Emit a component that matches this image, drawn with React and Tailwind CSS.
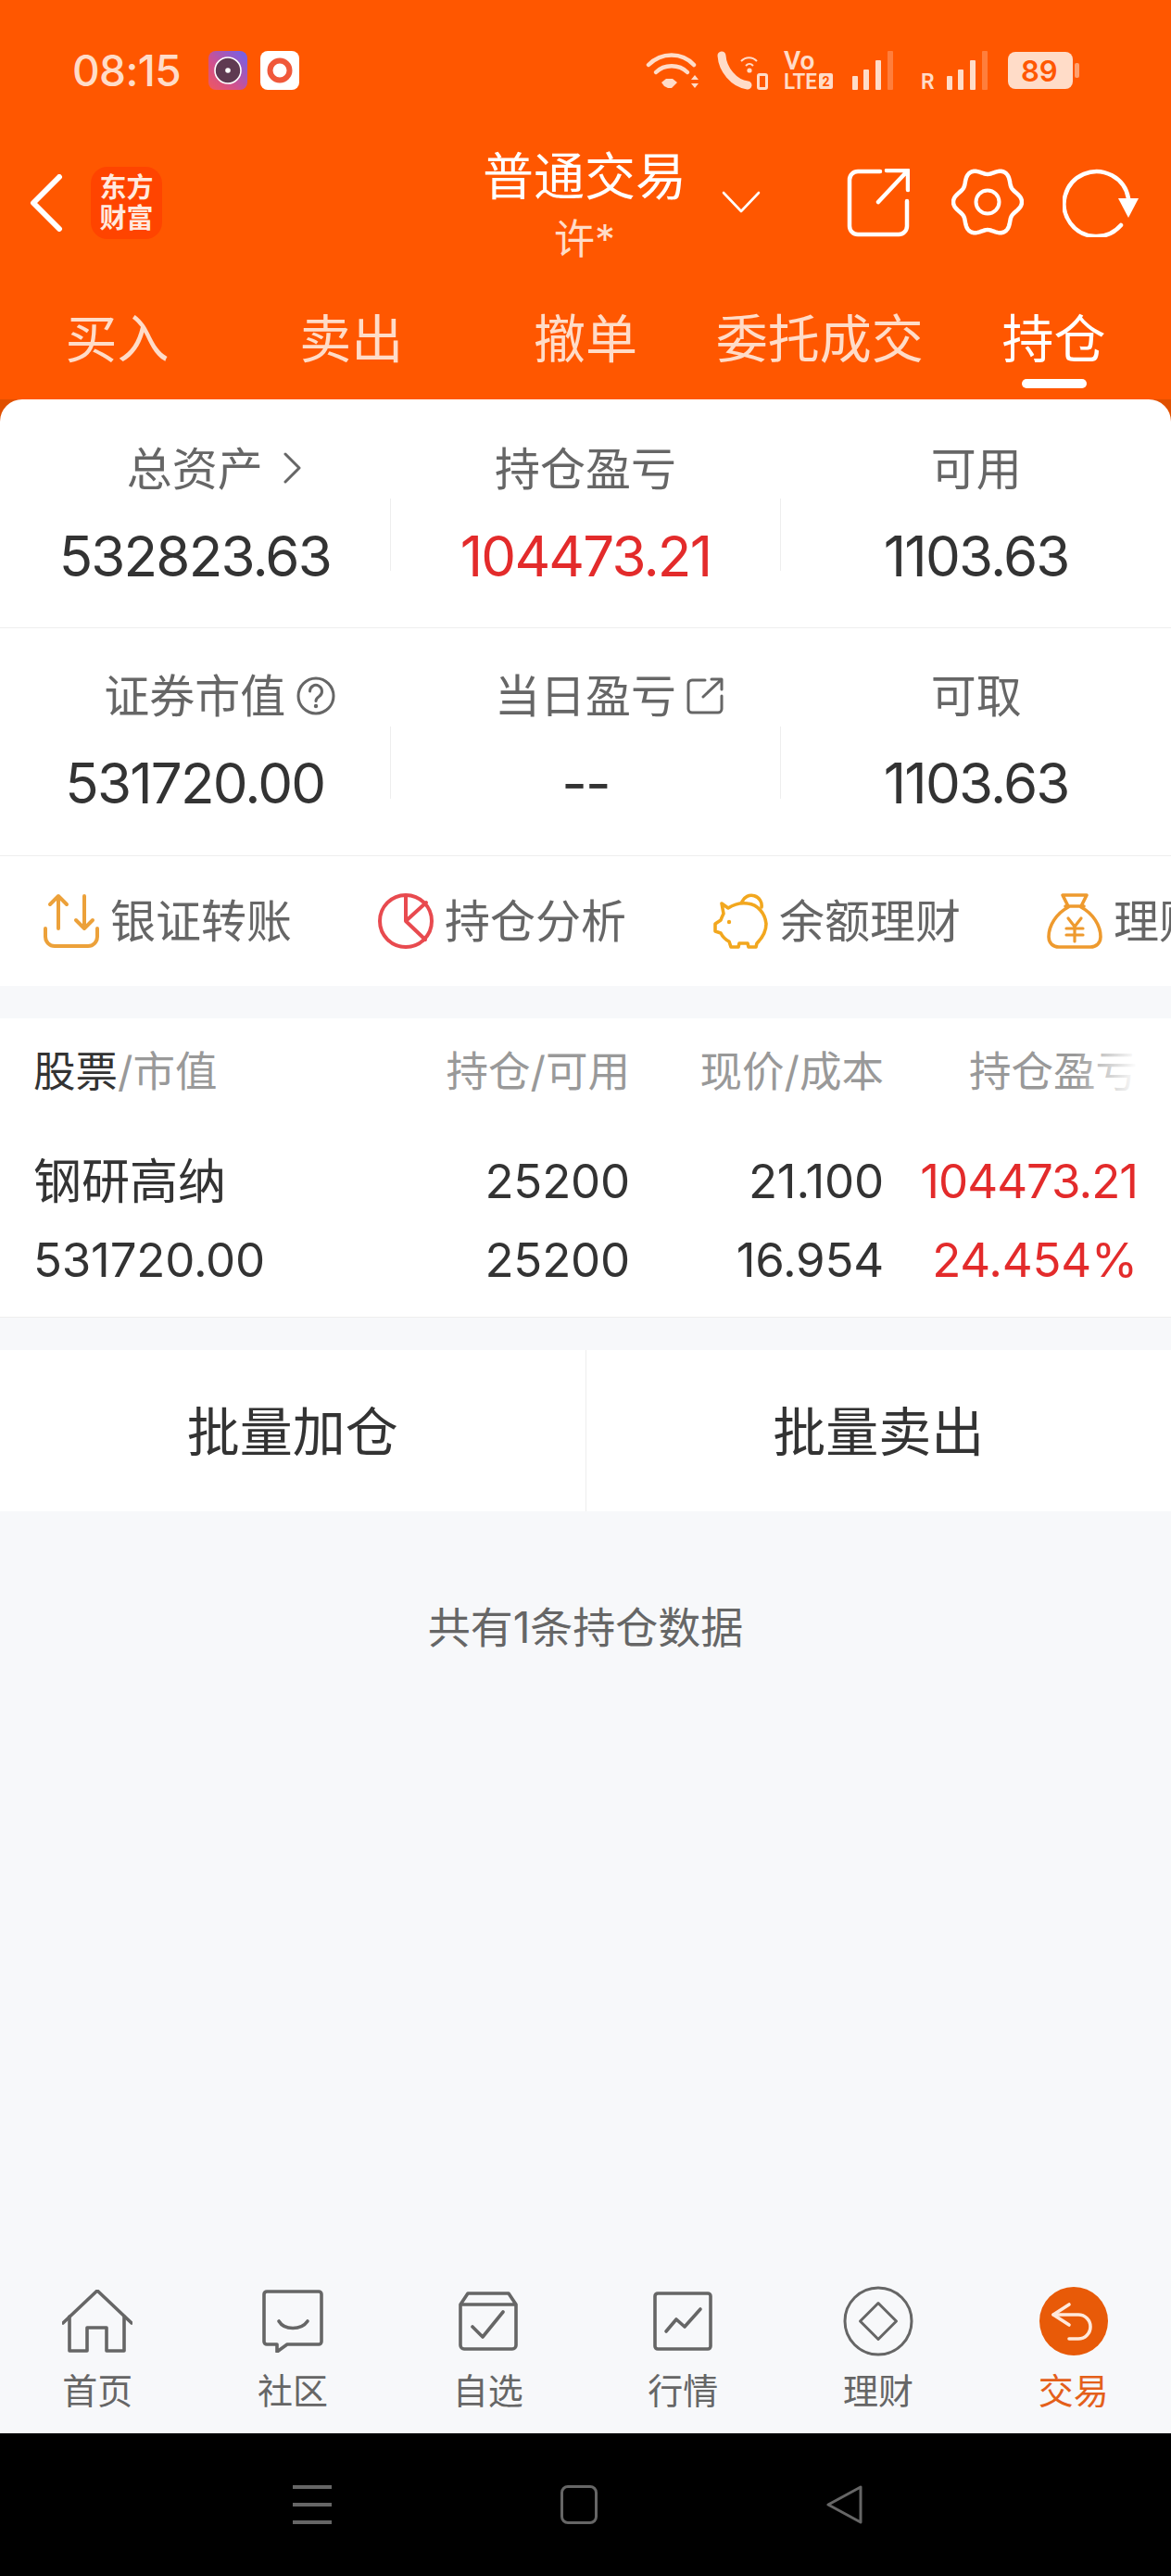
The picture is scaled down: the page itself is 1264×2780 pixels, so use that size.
// App.jsx
import React from 'react';

const gearPath = (() => {
  const pts = [];
  for (let i = 0; i < 120; i++) {
    const a = (i / 120) * Math.PI * 2;
    const r = 33.5 + 3.5 * Math.cos(6 * a);
    pts.push(`${(39 + r * Math.cos(a)).toFixed(2)} ${(38 + r * Math.sin(a)).toFixed(2)}`);
  }
  return `M${pts.join('L')}Z`;
})();

function Signal() {
  return (
    <svg width="45" height="42" viewBox="0 0 45 42" fill="#ffdcc8">
      <rect x="0" y="27" width="6" height="15" rx="1" />
      <rect x="12" y="20" width="6" height="22" rx="1" />
      <rect x="25" y="10" width="6" height="32" rx="1" />
      <rect x="38" y="0" width="6" height="42" rx="1" opacity="0.3" />
    </svg>
  );
}

function StatusBar() {
  return (
    <div className="h-[152px] flex items-center pl-[78px] text-[#ffdcc8]">
      <span className="w-[147px] text-[46px] leading-none font-medium tracking-[-0.6px]">08:15</span>
      <svg width="42" height="42" viewBox="0 0 42 42">
        <defs>
          <linearGradient id="recA" x1="1" y1="0" x2="0" y2="1">
            <stop offset="0" stopColor="#6a62f0" />
            <stop offset="0.6" stopColor="#d0508f" />
            <stop offset="1" stopColor="#f0585f" />
          </linearGradient>
        </defs>
        <rect width="42" height="42" rx="8" fill="url(#recA)" />
        <circle cx="21" cy="21" r="14" fill="#5f3a52" stroke="#fff" strokeWidth="1.6" />
        <circle cx="21" cy="21" r="2.8" fill="#fff" />
      </svg>
      <svg className="ml-[14px]" width="42" height="42" viewBox="0 0 42 42">
        <rect width="42" height="42" rx="8" fill="#fff" />
        <circle cx="21" cy="21" r="10.5" fill="#fff" stroke="#f0583a" strokeWidth="6" />
      </svg>
      <svg className="ml-[374px]" width="59" height="42" viewBox="0 0 59 42" fill="none" stroke="#ffdcc8" strokeLinecap="round">
        <path d="M3 15C17 1 39 1 52 15" strokeWidth="4.5" />
        <path d="M11 23C20 14 36 14 45 23" strokeWidth="4.5" />
        <path d="M20 40l-3-4 5-4h7l5 4-6 6h-4z" fill="#ffdcc8" stroke="none" transform="translate(0 -2)" />
        <path d="M49 31l4-5 4 5zM49 35h8l-4 5z" fill="#ffdcc8" stroke="none" />
      </svg>
      <svg className="ml-[18px]" width="56" height="42" viewBox="0 0 56 42" fill="none" stroke="#ffdcc8">
        <path d="M5 5C6 20 18 35 33 37" strokeWidth="9" strokeLinecap="round" />
        <path d="M26 11C31 6 38 6 43 11M31 16C34 13 36 13 39 16" strokeWidth="2" />
        <circle cx="35" cy="21" r="2.6" fill="#ffdcc8" stroke="none" />
        <rect x="44.5" y="25.5" width="9" height="15" rx="1.5" strokeWidth="3" />
      </svg>
      <svg className="ml-[16px] overflow-visible" width="54" height="42" viewBox="0 0 54 42">
        <text x="0" y="20" fontSize="28" fontWeight="600" fontFamily="Roboto" fill="#ffdcc8">Vo</text>
        <text x="0" y="41" fontSize="23" fontWeight="600" fontFamily="Roboto" fill="#ffdcc8" textLength="36" lengthAdjust="spacingAndGlyphs">LTE</text>
        <rect x="38" y="24" width="15" height="17" rx="2" fill="#ffdcc8" />
        <text x="41.5" y="38" fontSize="14" fontWeight="700" fontFamily="Roboto" fill="#ff5700">2</text>
      </svg>
      <span className="ml-[20px]"><Signal /></span>
      <svg className="ml-[29px] overflow-visible" width="15" height="42" viewBox="0 0 15 42">
        <text x="0" y="41" fontSize="23" fontWeight="600" fontFamily="Roboto" fill="#ffdcc8">R</text>
      </svg>
      <span className="ml-[13px]"><Signal /></span>
      <svg className="ml-[21px]" width="77" height="42" viewBox="0 0 77 42">
        <rect x="0" y="1" width="70" height="40" rx="8" fill="#ffdcc8" />
        <rect x="72" y="13" width="5" height="16" rx="2" fill="#ffdcc8" opacity="0.55" />
        <text x="14" y="33" fontSize="31" fontWeight="600" fontFamily="Inter" fill="#ff5700">89</text>
      </svg>
    </div>
  );
}

function NavBar() {
  return (
    <div className="h-[134px] flex items-start pl-[32px] text-white">
      <svg className="mt-[36px]" width="36" height="62" viewBox="0 0 36 62" fill="none" stroke="#fff" strokeWidth="6" strokeLinecap="round" strokeLinejoin="round">
        <path d="M32 3L4 31l28 28" />
      </svg>
      <div className="ml-[30px] mt-[28px] w-[77px] h-[78px] rounded-[18px] bg-[#ff4400] flex flex-col items-center justify-center text-[29px] leading-[33px] font-bold text-[#ffe9de]">
        <span>东方</span>
        <span>财富</span>
      </div>
      <div className="ml-[349px] w-[214px] pt-[8px] flex flex-col items-center">
        <span className="text-[55px] leading-[60px] whitespace-nowrap">普通交易</span>
        <span className="mt-[16px] text-[44px] leading-[44px] text-[#ffdcc8]">许*</span>
      </div>
      <svg className="ml-[41px] mt-[54px]" width="42" height="24" viewBox="0 0 42 24" fill="none" stroke="#fff" strokeWidth="2.6" strokeLinecap="round" strokeLinejoin="round">
        <path d="M2 2l19 20L40 2" />
      </svg>
      <svg className="ml-[93px] mt-[30px]" width="68" height="74" viewBox="0 0 68 74" fill="none" stroke="#fff" strokeWidth="4.5" strokeLinecap="round" strokeLinejoin="round">
        <path d="M36 3H12a9 9 0 0 0-9 9v50a9 9 0 0 0 9 9h44a9 9 0 0 0 9-9V35" />
        <path d="M34 36L65 3M43 2h23v21" />
      </svg>
      <svg className="ml-[45px] mt-[28px]" width="78" height="76" viewBox="0 0 78 76" fill="none" stroke="#fff" strokeWidth="4.5">
        <path d={gearPath} strokeLinejoin="round" />
        <circle cx="39" cy="38" r="12.5" strokeWidth="4" />
      </svg>
      <svg className="ml-[42px] mt-[30px]" width="82" height="74" viewBox="0 0 82 74" fill="none" stroke="#fff" strokeWidth="4.5" strokeLinecap="round">
        <path d="M63 61A35 35 0 1 1 71 32" />
        <path d="M60 32h22L71 53z" fill="#fff" stroke="none" />
      </svg>
    </div>
  );
}

const tabs = ['买入', '卖出', '撤单', '委托成交', '持仓'];

function Tabs() {
  return (
    <div className="h-[145px] pt-[50px] flex">
      {tabs.map((t, i) => (
        <div key={t} className="flex-1 flex flex-col items-center">
          <span className={`text-[56px] leading-[60px] ${i === 4 ? 'text-white' : 'text-[#ffdcc8]'}`}>{t}</span>
          {i === 4 && <div className="mt-[13px] w-[70px] h-[10px] rounded-full bg-white" />}
        </div>
      ))}
    </div>
  );
}

function SummaryCell({ label, value, red, icon }) {
  return (
    <div className="flex-1 flex flex-col items-center">
      <span className="relative text-[49px] leading-[60px] text-[#666] whitespace-nowrap">
        {label}
        {icon}
      </span>
      <span className={`mt-[28px] text-[60px] leading-[70px] tracking-[-1.8px] ${red ? 'text-[#e32b2b]' : 'text-[#333]'}`}>{value}</span>
    </div>
  );
}

function Divider() {
  return <div className="w-px h-[78px] self-center bg-[#eeeeee]" />;
}

const ChevronSmall = (
  <svg className="absolute left-[169px] top-[11px]" width="20" height="34" viewBox="0 0 20 34" fill="none" stroke="#666" strokeWidth="3" strokeLinecap="round" strokeLinejoin="round">
    <path d="M2 2l15 15L2 32" />
  </svg>
);

const HelpIcon = (
  <svg className="absolute left-[208px] top-[8px]" width="42" height="42" viewBox="0 0 42 42" fill="none" stroke="#666" strokeWidth="3">
    <circle cx="21" cy="21" r="19" />
    <path d="M14.5 16a6.5 6.5 0 1 1 10 5.4c-2.3 1.5-3.5 2.6-3.5 5.1" strokeLinecap="round" />
    <circle cx="21" cy="32" r="2.2" fill="#666" stroke="none" />
  </svg>
);

const ExternalIcon = (
  <svg className="absolute left-[207px] top-[9px]" width="40" height="40" viewBox="0 0 40 40" fill="none" stroke="#666" strokeWidth="3" strokeLinecap="round" strokeLinejoin="round">
    <path d="M20 3H6a4 4 0 0 0-4 4v27a4 4 0 0 0 4 4h28a4 4 0 0 0 4-4V20" />
    <path d="M18 21L37 3M27 2h11v11" />
  </svg>
);

function Summary() {
  return (
    <div>
      <div className="h-[247px] pt-[46px] flex border-b border-[#eeeeee]">
        <SummaryCell label="总资产" value="532823.63" icon={ChevronSmall} />
        <Divider />
        <SummaryCell label="持仓盈亏" value="104473.21" red />
        <Divider />
        <SummaryCell label="可用" value="1103.63" />
      </div>
      <div className="h-[246px] pt-[44px] flex border-b border-[#eeeeee]">
        <SummaryCell label="证券市值" value="531720.00" icon={HelpIcon} />
        <Divider />
        <SummaryCell label="当日盈亏" value="--" icon={ExternalIcon} />
        <Divider />
        <SummaryCell label="可取" value="1103.63" />
      </div>
    </div>
  );
}

function TransferIcon() {
  return (
    <svg width="60" height="60" viewBox="0 0 60 60" fill="none" stroke="#eca13a" strokeWidth="4" strokeLinecap="round" strokeLinejoin="round">
      <path d="M16 38V3M7 12l9-9 9 9" />
      <path d="M44 3v35M35 29l9 9 9-9" />
      <path d="M2 38v9a10 10 0 0 0 10 10h36a10 10 0 0 0 10-10v-9" />
    </svg>
  );
}

function PieIcon() {
  return (
    <svg width="60" height="60" viewBox="0 0 60 60" fill="none" stroke="#e84a4f" strokeWidth="4" strokeLinecap="round" strokeLinejoin="round">
      <circle cx="30" cy="30" r="28" />
      <path d="M30 3v27l22-20M30 30l21 20" />
    </svg>
  );
}

function PigIcon() {
  return (
    <svg width="60" height="60" viewBox="0 0 60 60" fill="none" stroke="#f2a71e" strokeWidth="3.6" strokeLinecap="round" strokeLinejoin="round">
      <path d="M32 9a11 11 0 0 1 21 6" />
      <path d="M10 11l7 5c6-4 13-6 21-5 11 1 19 11 20 22 0 8-4 15-10 21l-1 4h-8l-1-4h-9l-1 4h-8l-2-6c-4-2-7-5-9-9l-6-2v-8l6-4c1-3 2-5 3-7z" />
      <circle cx="18" cy="31" r="2.2" fill="#f2a71e" stroke="none" />
    </svg>
  );
}

function BagIcon() {
  return (
    <svg width="60" height="60" viewBox="0 0 60 60" fill="none" stroke="#ee9a2e" strokeWidth="3.6" strokeLinecap="round" strokeLinejoin="round">
      <path d="M17 2h26l-6 12H23zM20 14h20" />
      <path d="M23 15C10 22 2 35 2 47c0 7 5 11 11 11h34c6 0 11-4 11-11 0-12-8-25-21-32" />
      <path d="M23 27l7 9 7-9M21 38h18M21 45h18M30 36v16" strokeWidth="3.2" />
    </svg>
  );
}

const actions = [
  { icon: <TransferIcon />, label: '银证转账' },
  { icon: <PieIcon />, label: '持仓分析' },
  { icon: <PigIcon />, label: '余额理财' },
  { icon: <BagIcon />, label: '理财产品' },
];

function Actions() {
  return (
    <div className="h-[140px] flex items-center gap-[93px] pl-[47px] overflow-hidden whitespace-nowrap">
      {actions.map((a) => (
        <div key={a.label} className="flex items-center gap-[12px] shrink-0">
          {a.icon}
          <span className="pt-[2px] text-[49px] leading-[60px] text-[#666]">{a.label}</span>
        </div>
      ))}
    </div>
  );
}

const tableCols = 'grid grid-cols-[320px_324px_274px_274px] items-center whitespace-nowrap';

function Holdings() {
  return (
    <div className="mt-[35px] h-[323px] bg-white border-b border-[#eeeeee] px-[36px]">
      <div className={`relative h-[116px] text-[45.5px] text-[#999] ${tableCols}`}>
        <span><span className="text-[#333]">股票</span>/市值</span>
        <span className="text-right">持仓/可用</span>
        <span className="text-right">现价/成本</span>
        <span className="text-right">持仓盈亏</span>
        <div className="absolute top-0 right-[-36px] h-full w-[104px] bg-gradient-to-r from-transparent to-white to-[65%]" />
      </div>
      <div className={`mt-[18px] h-[85px] text-[#333] text-[51px] tracking-[-0.2px] ${tableCols}`}>
        <span className="text-[52px] tracking-normal">钢研高纳</span>
        <span className="text-right">25200</span>
        <span className="text-right">21.100</span>
        <span className="text-right text-[#e32b2b] tracking-[-1px]">104473.21</span>
      </div>
      <div className={`h-[85px] text-[#333] text-[51px] tracking-[-0.2px] ${tableCols}`}>
        <span>531720.00</span>
        <span className="text-right">25200</span>
        <span className="text-right">16.954</span>
        <span className="text-right text-[#e32b2b]">24.454%</span>
      </div>
    </div>
  );
}

function BatchButtons() {
  return (
    <div className="mt-[35px] h-[174px] bg-white flex text-[57px] text-[#333]">
      <div className="flex-1 pt-[4px] flex items-center justify-center border-r border-[#eeeeee]">批量加仓</div>
      <div className="flex-1 pt-[4px] flex items-center justify-center">批量卖出</div>
    </div>
  );
}

const bottomTabs = [
  {
    label: '首页',
    icon: (
      <svg width="76" height="68" viewBox="0 0 76 68" fill="none" stroke="#666" strokeWidth="3.6" strokeLinejoin="round" strokeLinecap="round">
        <path d="M1 36L38 1l37 35" />
        <path d="M8 29v37h19V41h21v25h19V29" />
      </svg>
    ),
  },
  {
    label: '社区',
    icon: (
      <svg width="66" height="68" viewBox="0 0 66 68" fill="none" stroke="#666" strokeWidth="3.6" strokeLinejoin="round" strokeLinecap="round">
        <path d="M5 2h56a3 3 0 0 1 3 3v51a3 3 0 0 1-3 3H27l-11 8v-8H5a3 3 0 0 1-3-3V5a3 3 0 0 1 3-3z" />
        <path d="M18 34c6 10 24 10 31 0" />
      </svg>
    ),
  },
  {
    label: '自选',
    icon: (
      <svg width="64" height="64" viewBox="0 0 64 64" fill="none" stroke="#666" strokeWidth="3.6" strokeLinejoin="round" strokeLinecap="round">
        <path d="M10 2h44l8 12v44a4 4 0 0 1-4 4H6a4 4 0 0 1-4-4V14zM2 14h60" />
        <path d="M15 38l11 11 22-27" />
      </svg>
    ),
  },
  {
    label: '行情',
    icon: (
      <svg width="64" height="64" viewBox="0 0 64 64" fill="none" stroke="#666" strokeWidth="3.6" strokeLinejoin="round" strokeLinecap="round">
        <rect x="2" y="2" width="60" height="60" rx="3" />
        <path d="M14 43l11-13 9 8 17-19" />
      </svg>
    ),
  },
  {
    label: '理财',
    icon: (
      <svg width="76" height="76" viewBox="0 0 76 76" fill="none" stroke="#666" strokeWidth="3">
        <circle cx="38" cy="38" r="36" />
        <path d="M38 18.5L57.5 38 38 57.5 18.5 38z" strokeLinejoin="round" />
      </svg>
    ),
  },
  {
    label: '交易',
    active: true,
    icon: (
      <svg width="74" height="74" viewBox="0 0 74 74" fill="none" stroke="#ffe9dc" strokeWidth="3.6" strokeLinejoin="round" strokeLinecap="round">
        <circle cx="37" cy="37" r="37" fill="#e85a08" stroke="none" />
        <path d="M32 19L15 30l17 11" />
        <path d="M15 30h27a13 13 0 0 1 0 26H32" />
      </svg>
    ),
  },
];

function BottomTabs() {
  return (
    <div className="h-[176px] pt-[17px] flex">
      {bottomTabs.map((t) => (
        <div key={t.label} className="flex-1 flex flex-col items-center">
          <div className="h-[76px] flex items-center justify-center">{t.icon}</div>
          <span className={`mt-[12px] text-[38px] leading-[50px] ${t.active ? 'text-[#e4601a]' : 'text-[#666]'}`}>{t.label}</span>
        </div>
      ))}
    </div>
  );
}

function SystemNav() {
  return (
    <div className="h-[154px] bg-black flex items-start pt-[56px] pl-[316px]">
      <svg width="42" height="42" viewBox="0 0 42 42" fill="#666">
        <rect y="0" width="42" height="4" />
        <rect y="19" width="42" height="4" />
        <rect y="38" width="42" height="4" />
      </svg>
      <div className="ml-[247px] w-[40px] h-[42px] rounded-[8px] border-[3px] border-[#666]" />
      <svg className="ml-[246px]" width="40" height="42" viewBox="0 0 40 42" fill="none" stroke="#666" strokeWidth="3" strokeLinejoin="round">
        <path d="M3 21L38 2v38z" />
      </svg>
    </div>
  );
}

export default function App() {
  return (
    <div className="w-[1264px] h-[2780px] flex flex-col overflow-hidden bg-[#f7f8fa] font-['Inter','Noto_Sans_CJK_SC',sans-serif]">
      <div className="bg-[#ff5700]">
        <StatusBar />
        <NavBar />
        <Tabs />
      </div>
      <div className="bg-[#e05000]">
        <div className="bg-white rounded-t-[24px]">
          <Summary />
          <Actions />
        </div>
      </div>
      <Holdings />
      <BatchButtons />
      <div className="flex-1 pt-[95px] text-center text-[46px] leading-[60px] text-[#666]">共有1条持仓数据</div>
      <BottomTabs />
      <SystemNav />
    </div>
  );
}
